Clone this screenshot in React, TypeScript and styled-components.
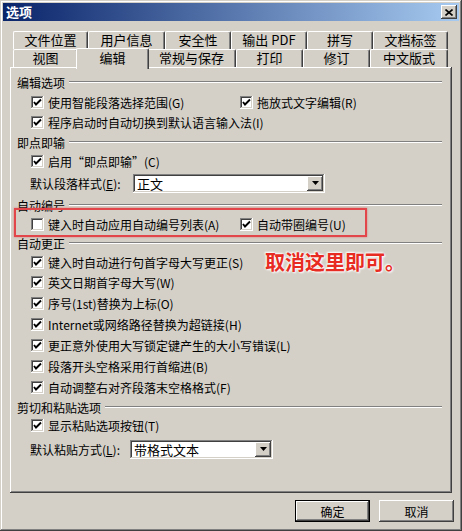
import styled, { createGlobalStyle } from "styled-components";

const GlobalStyle = createGlobalStyle`
  html, body { margin: 0; padding: 0; background: #d4d0c8; }
  body {
    font-family: "Noto Sans CJK SC", "Liberation Sans", sans-serif;
    font-size: 12px;
    color: #000;
  }
  * { box-sizing: border-box; }
`;

const raised =
  "inset -1px -1px #404040, inset 1px 1px #ffffff, inset -2px -2px #808080, inset 2px 2px #d4d0c8";
const sunken =
  "inset -1px -1px #ffffff, inset 1px 1px #808080, inset -2px -2px #d4d0c8, inset 2px 2px #404040";

const tabRows = [
  [
    { label: "文件位置", w: 75 },
    { label: "用户信息", w: 77 },
    { label: "安全性", w: 66 },
    { label: "输出 PDF", w: 76 },
    { label: "拼写", w: 66 },
    { label: "文档标签", w: 75 },
  ],
  [
    { label: "视图", w: 65 },
    { label: "编辑", w: 69, active: true },
    { label: "常规与保存", w: 89 },
    { label: "打印", w: 67 },
    { label: "修订", w: 67 },
    { label: "中文版式", w: 78 },
  ],
];

const autoCorrect = [
  "英文日期首字母大写(W)",
  "序号(1st)替换为上标(O)",
  "Internet或网络路径替换为超链接(H)",
  "更正意外使用大写锁定键产生的大小写错误(L)",
  "段落开头空格采用行首缩进(B)",
  "自动调整右对齐段落末空格格式(F)",
];

function Check({ checked }: { checked: boolean }) {
  return (
    <Box>
      {checked && (
        <svg width="13" height="13" viewBox="0 0 13 13">
          <polyline
            points="3,6 5,8.5 10,3.5"
            fill="none"
            stroke="#000"
            strokeWidth="1.9"
          />
        </svg>
      )}
    </Box>
  );
}

function CheckItem({
  checked = true,
  w,
  children,
}: {
  checked?: boolean;
  w?: number;
  children: React.ReactNode;
}) {
  return (
    <Item style={w ? { width: w } : undefined}>
      <Check checked={checked} />
      <span>{children}</span>
    </Item>
  );
}

function Select({ value, w }: { value: string; w: number }) {
  return (
    <SelectBox style={{ width: w }}>
      <span>{value}</span>
      <DropButton>
        <svg width="7" height="4" viewBox="0 0 7 4">
          <polygon points="0,0 7,0 3.5,4" fill="#000" />
        </svg>
      </DropButton>
    </SelectBox>
  );
}

export default function App() {
  return (
    <>
      <GlobalStyle />
      <Dialog>
        <TitleBar>
          <Title>选项</Title>
          <CloseButton>
            <svg width="8" height="7" viewBox="0 0 8 7">
              <path d="M0.5 0.5 L7.5 6.5 M7.5 0.5 L0.5 6.5" stroke="#000" strokeWidth="1.6" />
            </svg>
          </CloseButton>
        </TitleBar>

        <Tabs>
          {tabRows.map((row, i) => (
            <TabRow key={i}>
              {row.map((t) => (
                <Tab key={t.label} $w={t.w} $active={!!("active" in t && t.active)}>
                  {t.label}
                </Tab>
              ))}
            </TabRow>
          ))}
        </Tabs>

        <Panel>
          <GroupHeader $h={20}>编辑选项</GroupHeader>
          <Row $h={20}>
            <CheckItem w={209}>使用智能段落选择范围(G)</CheckItem>
            <CheckItem>拖放式文字编辑(R)</CheckItem>
          </Row>
          <Row $h={20}>
            <CheckItem>程序启动时自动切换到默认语言输入法(I)</CheckItem>
          </Row>

          <GroupHeader $h={20}>即点即输</GroupHeader>
          <Row $h={18}>
            <CheckItem>启用“即点即输”(C)</CheckItem>
          </Row>
          <FieldRow $h={26}>
            <FieldLabel $w={103}>
              默认段落样式(<u>E</u>):
            </FieldLabel>
            <Select value="正文" w={192} />
          </FieldRow>

          <GroupHeader $h={18}>自动编号</GroupHeader>
          <Row $h={20}>
            <CheckItem checked={false} w={209}>
              键入时自动应用自动编号列表(A)
            </CheckItem>
            <CheckItem>自动带圈编号(U)</CheckItem>
          </Row>

          <GroupHeader $h={18}>自动更正</GroupHeader>
          <Row $h={20}>
            <CheckItem>键入时自动进行句首字母大写更正(S)</CheckItem>
          </Row>
          {autoCorrect.map((t) => (
            <Row key={t} $h={21}>
              <CheckItem>{t}</CheckItem>
            </Row>
          ))}

          <GroupHeader $h={18}>剪切和粘贴选项</GroupHeader>
          <Row $h={18}>
            <CheckItem>显示粘贴选项按钮(T)</CheckItem>
          </Row>
          <FieldRow $h={30}>
            <FieldLabel $w={100}>
              默认粘贴方式(<u>L</u>):
            </FieldLabel>
            <Select value="带格式文本" w={143} />
          </FieldRow>

          <Highlight />
          <Note>取消这里即可。</Note>
        </Panel>

        <Footer>
          <Button $default>确定</Button>
          <Button>取消</Button>
        </Footer>
      </Dialog>
    </>
  );
}

const Dialog = styled.div`
  width: 462px;
  height: 531px;
  padding: 3px;
  background: #d4d0c8;
  box-shadow: inset -1px -1px #404040, inset 1px 1px #d4d0c8,
    inset -2px -2px #808080, inset 2px 2px #ffffff;
  display: flex;
  flex-direction: column;
`;

const TitleBar = styled.div`
  height: 18px;
  display: flex;
  align-items: center;
  justify-content: space-between;
  padding: 0 2px 0 3px;
  background: linear-gradient(to right, #0a246a, #a6caf0);
`;

const Title = styled.span`
  color: #fff;
  font-weight: bold;
  font-size: 13px;
  line-height: 18px;
`;

const CloseButton = styled.div`
  width: 16px;
  height: 14px;
  background: #d4d0c8;
  box-shadow: ${raised};
  display: flex;
  align-items: center;
  justify-content: center;
`;

const Tabs = styled.div`
  margin-top: 10px;
  padding-left: 10px;
  display: flex;
  flex-direction: column;
`;

const TabRow = styled.div`
  display: flex;
  align-items: flex-end;
  height: 18px;
`;

const Tab = styled.div<{ $w: number; $active?: boolean }>`
  position: relative;
  width: ${(p) => p.$w + (p.$active ? 4 : 0)}px;
  height: ${(p) => (p.$active ? 21 : 18)}px;
  margin: ${(p) => (p.$active ? "0 -2px -2px -2px" : "0")};
  z-index: ${(p) => (p.$active ? 2 : 1)};
  background: #d4d0c8;
  border-top: 1px solid #fff;
  border-left: 1px solid #fff;
  border-right: 1px solid #404040;
  border-radius: 2px 2px 0 0;
  box-shadow: inset -1px 0 #808080;
  text-align: center;
  font-size: 13px;
  line-height: ${(p) => (p.$active ? 17 : 16)}px;
  white-space: nowrap;
`;

const Panel = styled.div`
  position: relative;
  height: 426px;
  margin: 0 7px;
  padding: 5px 10px 0 7px;
  box-shadow: inset -1px -1px #404040, inset 1px 1px #ffffff,
    inset -2px -2px #808080;
`;

const GroupHeader = styled.div<{ $h: number }>`
  height: ${(p) => p.$h}px;
  display: flex;
  align-items: center;
  gap: 4px;
  font-size: 12px;
  white-space: nowrap;
  &::after {
    content: "";
    flex: 1;
    height: 0;
    border-top: 1px solid #808080;
    border-bottom: 1px solid #fff;
  }
`;

const Row = styled.div<{ $h: number }>`
  height: ${(p) => p.$h}px;
  display: flex;
  align-items: center;
  padding-left: 14px;
`;

const Item = styled.div`
  display: flex;
  align-items: center;
  gap: 4px;
  white-space: nowrap;
`;

const Box = styled.div`
  width: 13px;
  height: 13px;
  background: #fff;
  box-shadow: ${sunken};
  flex: none;
  display: flex;
`;

const FieldRow = styled.div<{ $h: number }>`
  height: ${(p) => p.$h}px;
  display: flex;
  align-items: center;
  padding-left: 13px;
`;

const FieldLabel = styled.span<{ $w: number }>`
  width: ${(p) => p.$w}px;
  white-space: nowrap;
  u { text-decoration: underline; }
`;

const SelectBox = styled.div`
  height: 19px;
  background: #fff;
  box-shadow: ${sunken};
  display: flex;
  align-items: center;
  justify-content: space-between;
  padding: 2px 2px 2px 4px;
  font-size: 13px;
`;

const DropButton = styled.div`
  width: 16px;
  height: 15px;
  background: #d4d0c8;
  box-shadow: ${raised};
  display: flex;
  align-items: center;
  justify-content: center;
`;

const Highlight = styled.div`
  position: absolute;
  left: 4px;
  top: 141px;
  width: 353px;
  height: 29px;
  border: 2px solid #e2454a;
  box-shadow: 0 0 2px rgba(226, 69, 74, 0.6);
  pointer-events: none;
`;

const Note = styled.div`
  position: absolute;
  left: 255px;
  top: 180px;
  font-size: 20px;
  font-weight: bold;
  color: #e82b22;
  text-shadow: 0 0 2px #fff, 1px 1px 2px #fff, -1px -1px 2px #fff;
  white-space: nowrap;
`;

const Footer = styled.div`
  display: flex;
  justify-content: flex-end;
  gap: 9px;
  padding: 7px 5px 0 0;
`;

const Button = styled.div<{ $default?: boolean }>`
  width: 75px;
  height: 22px;
  background: #d4d0c8;
  box-shadow: ${(p) =>
    p.$default
      ? "inset 0 0 0 1px #000, inset -2px -2px #404040, inset 2px 2px #ffffff, inset -3px -3px #808080"
      : raised};
  display: flex;
  align-items: center;
  justify-content: center;
  font-size: 12px;
`;
